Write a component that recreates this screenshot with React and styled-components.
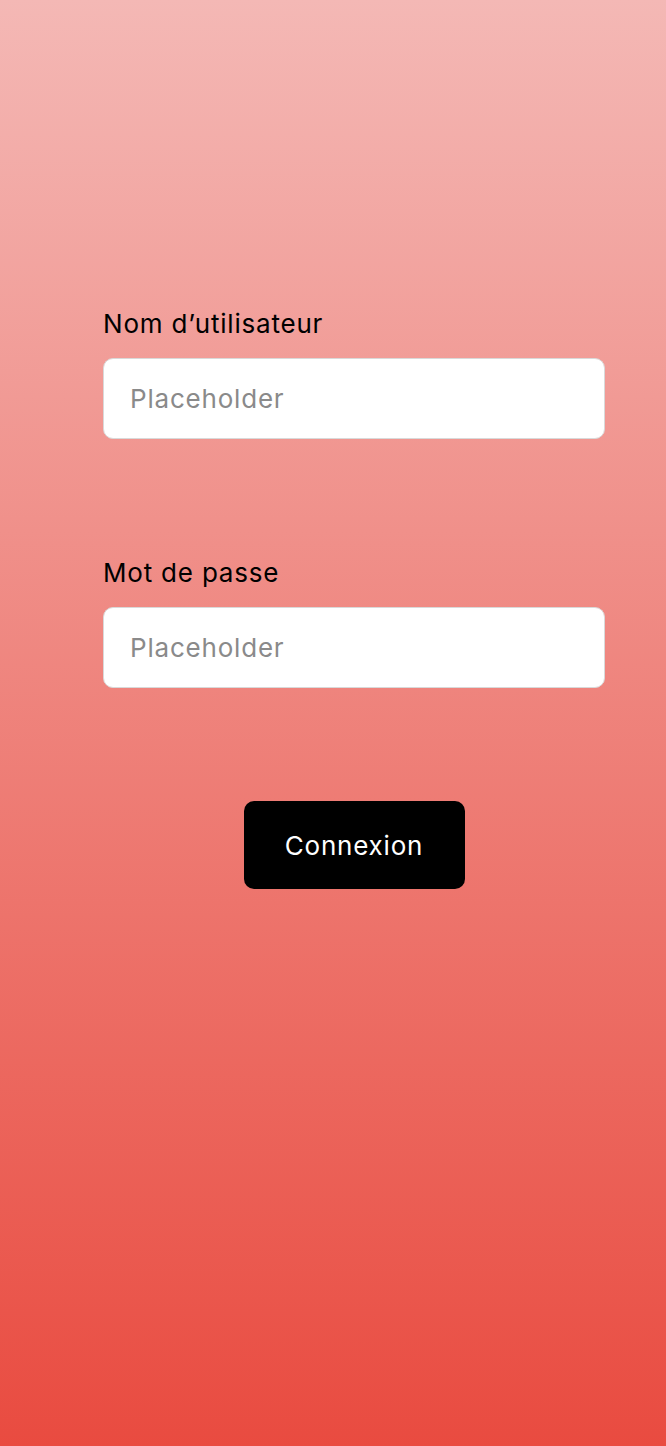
import React from "react";
import styled, { createGlobalStyle } from "styled-components";

const Global = createGlobalStyle`
  html, body { margin: 0; padding: 0; }
  body { font-family: Inter, "Noto Sans", sans-serif; }
  * { box-sizing: border-box; }
`;

const Page = styled.div`
  min-height: 1446px;
  background: linear-gradient(180deg, #f4b8b5 0%, #e94b40 100%);
  padding-top: 309px;
`;

const Form = styled.form`
  width: 502px;
  margin-left: 103px;
  display: flex;
  flex-direction: column;
`;

const Field = styled.div`
  display: flex;
  flex-direction: column;
  gap: 20px;
  margin-bottom: ${(p) => p.$after}px;
`;

const Label = styled.label`
  font-size: 26px;
  letter-spacing: 0.8px;
  line-height: 29px;
  color: #000;
  font-weight: 400;
`;

const Input = styled.input`
  height: 81px;
  width: 100%;
  border: 1px solid #d9d9d9;
  border-radius: 10px;
  background: #fff;
  padding: 0 26px;
  font-family: inherit;
  font-size: 26px;
  letter-spacing: 0.8px;
  color: #1e1e1e;
  outline: none;
  &::placeholder { color: #8a8a8a; }
`;

const Button = styled.button`
  align-self: center;
  width: 221px;
  height: 88px;
  border: none;
  border-radius: 10px;
  background: #000;
  color: #fff;
  font-family: inherit;
  font-size: 26px;
  letter-spacing: 0.8px;
  cursor: pointer;
`;

export default function App() {
  return (
    <>
      <Global />
      <Page>
        <Form onSubmit={(e) => e.preventDefault()}>
          <Field $after={119}>
            <Label htmlFor="user">Nom d’utilisateur</Label>
            <Input id="user" placeholder="Placeholder" />
          </Field>
          <Field $after={113}>
            <Label htmlFor="pass">Mot de passe</Label>
            <Input id="pass" type="password" placeholder="Placeholder" />
          </Field>
          <Button type="submit">Connexion</Button>
        </Form>
      </Page>
    </>
  );
}
